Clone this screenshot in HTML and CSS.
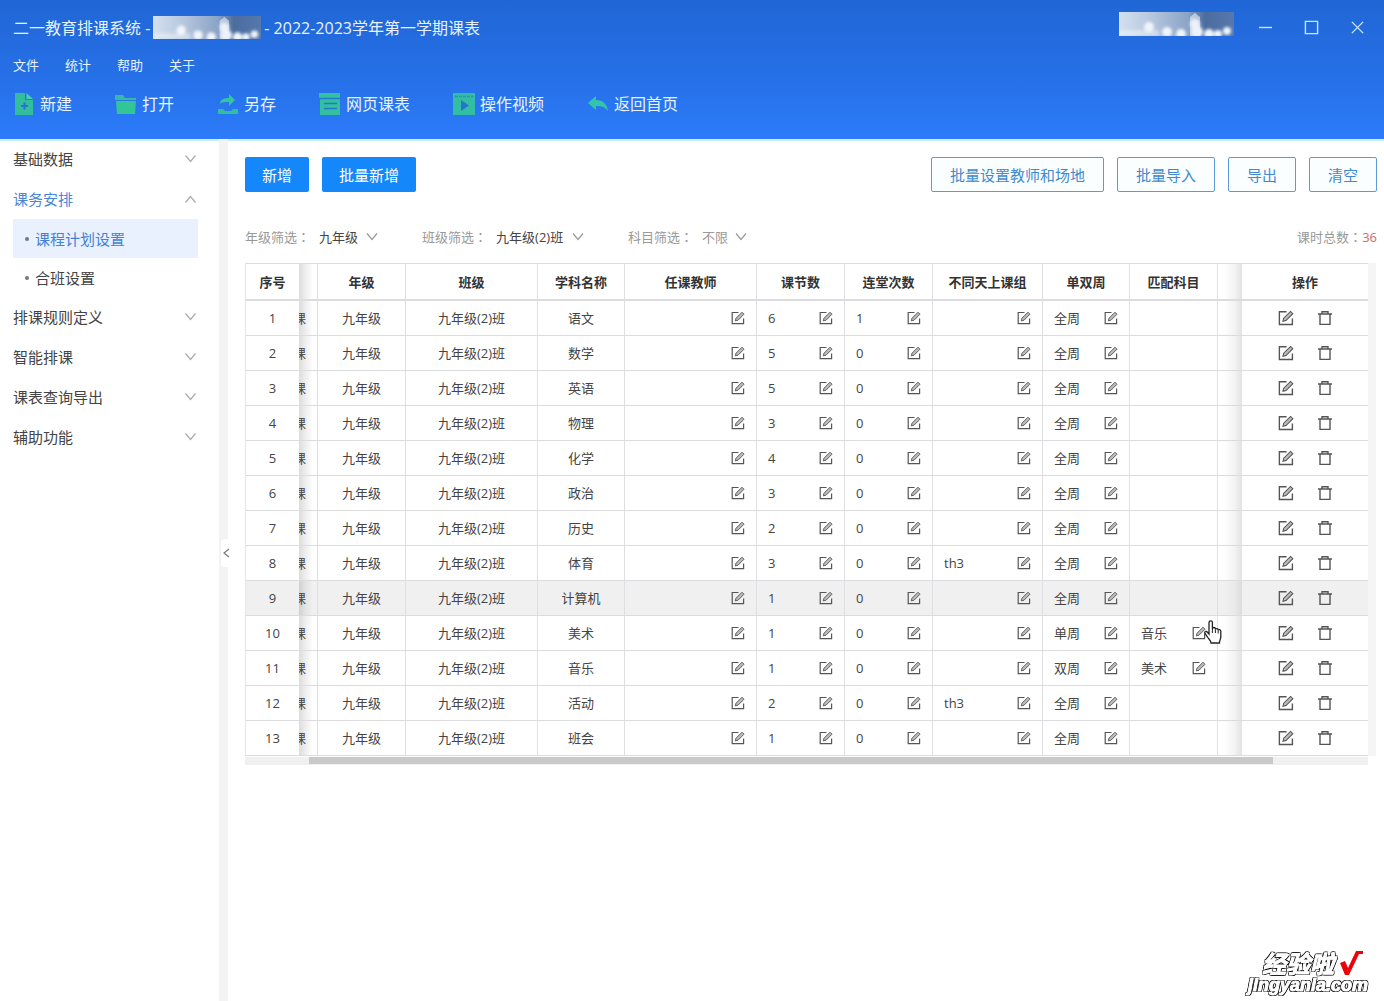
FILE: index.html
```html
<!DOCTYPE html>
<html lang="zh-CN">
<head>
<meta charset="utf-8">
<meta name="viewport" content="width=device-width, initial-scale=1">
<title>二一教育排课系统</title>
<link rel="stylesheet" href="styles.css">
</head>
<body>
<svg class="sprite" aria-hidden="true">
  <defs>
    <linearGradient id="sky" x1="0" x2="1" y1="0" y2="0">
      <stop offset="0" stop-color="#d3e0f0"/><stop offset=".3" stop-color="#b4c5dc"/>
      <stop offset=".6" stop-color="#8aa3c6"/><stop offset=".75" stop-color="#4b6c9f"/><stop offset="1" stop-color="#5778ac"/>
    </linearGradient>
    <filter id="soft" x="-20%" y="-20%" width="140%" height="140%"><feGaussianBlur stdDeviation="1.8"/></filter>
    <symbol id="i-cloud" viewBox="0 0 115 24" preserveAspectRatio="none">
      <rect width="115" height="24" fill="url(#sky)"/>
      <g fill="#f1f5fa" filter="url(#soft)">
        <circle cx="30" cy="15" r="5"/><circle cx="48" cy="20" r="5"/><circle cx="62" cy="22" r="5"/>
        <circle cx="76" cy="12" r="5"/><circle cx="78" cy="20" r="6"/><circle cx="90" cy="22" r="5"/>
        <circle cx="99" cy="22" r="4"/><circle cx="108" cy="19" r="4"/><rect x="0" y="18" width="40" height="6" opacity=".5"/>
      </g>
      <path d="M71 24V5L76 1l5 4v19z" fill="#eaf0f8" opacity=".6"/>
    </symbol>
    <symbol id="i-down" viewBox="0 0 12 12"><path d="M1 2.500l5 6 5-6" fill="none" stroke="currentColor" stroke-width="1.200"/></symbol>
    <symbol id="i-edit" viewBox="0 0 14 14">
      <path d="M7.500 1.500H1.200V12.700H12.600V7.500" fill="none" stroke="currentColor" stroke-width="1.200"/>
      <path d="M4.300 9.900l.7-2.700L11 1.200l2 2-6 6z" fill="#bbb" stroke="currentColor" stroke-width=".9"/>
    </symbol>
    <symbol id="i-trash" viewBox="0 0 16 16">
      <path d="M1 4h14M5 4V1.700h6V4M3 4v10.400h10V4" fill="none" stroke="currentColor" stroke-width="1.400"/>
    </symbol>
  </defs>
</svg>

<header class="top">
  <div class="titlebar">
    <h1 class="title"><span>二一教育排课系统 -</span><svg class="mask mask-title" aria-hidden="true"><use href="#i-cloud"/></svg><span>- 2022-2023学年第一学期课表</span></h1>
    <div class="window">
      <svg class="mask mask-user" aria-hidden="true"><use href="#i-cloud"/></svg>
      <button class="win" aria-label="最小化"><svg viewBox="0 0 16 16"><path d="M1 8h14"/></svg></button>
      <button class="win" aria-label="最大化"><svg viewBox="0 0 16 16"><path d="M1.500 1.500h13v13h-13z"/></svg></button>
      <button class="win" aria-label="关闭"><svg viewBox="0 0 16 16"><path d="M2 2l12 12M14 2L2 14"/></svg></button>
    </div>
  </div>
  <nav class="menu"><a href="#">文件</a><a href="#">统计</a><a href="#">帮助</a><a href="#">关于</a></nav>
  <div class="tools">
    <button class="tool"><svg viewBox="0 0 22 22"><path d="M2 0h10v7h8v15H2z" fill="#32bd9c"/><path d="M13.500 0L20 6h-6.500z" fill="#46d3ab"/><path d="M8 13h7M11.500 9.500v7" stroke="#2672d8" stroke-width="2"/></svg>新建</button>
    <button class="tool"><svg viewBox="0 0 22 22"><path d="M0 2h8l2 3h11v2H0z" fill="#35b9a8"/><path d="M1 8h20l-1 13H2z" fill="#32c596"/></svg>打开</button>
    <button class="tool"><svg viewBox="0 0 22 22"><path d="M3 11c0-4 3-6 9-6V1l6 6-6 6V9C8 9 5 9 3 11z" fill="#32c5a0"/><path d="M1 16h5l2 2h6l2-2h5v5H1z" fill="#32bd9c"/></svg>另存</button>
    <button class="tool"><svg viewBox="0 0 22 22"><path d="M0 0h21v5H0zM1 6h20v16H1z" fill="#32c0a0"/><path d="M0 5.500h21M5 10.500h13M5 15.500h13" stroke="#2378c8" stroke-width="1.500"/></svg>网页课表</button>
    <button class="tool"><svg viewBox="0 0 22 22"><path d="M0 0h22v22H0z" fill="#32bda4"/><path d="M2 3.500h18" stroke="#249ba4" stroke-width="1.500" stroke-dasharray="3 1"/><path d="M8 7l8 5.500L8 18z" fill="#2276cc"/></svg>操作视频</button>
    <button class="tool"><svg viewBox="0 0 22 22"><path d="M1 10l8-7v4c7 0 11 4 12 11-3-4-6-5-12-5v4z" fill="#32c5ac"/></svg>返回首页</button>
  </div>
</header>

<div class="body">
  <nav class="side">
    <a class="item" href="#">基础数据<svg><use href="#i-down"/></svg></a>
    <a class="item open" href="#">课务安排<svg><use href="#i-down"/></svg></a>
    <ul class="sub">
      <li class="current"><a href="#">课程计划设置</a></li>
      <li><a href="#">合班设置</a></li>
    </ul>
    <a class="item" href="#">排课规则定义<svg><use href="#i-down"/></svg></a>
    <a class="item" href="#">智能排课<svg><use href="#i-down"/></svg></a>
    <a class="item" href="#">课表查询导出<svg><use href="#i-down"/></svg></a>
    <a class="item" href="#">辅助功能<svg><use href="#i-down"/></svg></a>
  </nav>
  <div class="divider"><button class="collapse" aria-label="收起侧栏"><svg viewBox="0 0 8 10"><path d="M7 1L2 5l5 4"/></svg></button></div>

  <main class="main">
    <div class="actions">
      <button class="btn solid">新增</button>
      <button class="btn solid">批量新增</button>
      <span class="space"></span>
      <button class="btn line">批量设置教师和场地</button>
      <button class="btn line">批量导入</button>
      <button class="btn line">导出</button>
      <button class="btn line">清空</button>
    </div>
    <div class="filters">
      <div class="filter"><label for="grade">年级筛选<span class="colon" lang="zh-TW">：</span></label><span class="pick pick-m"><select id="grade"><option>九年级</option></select><svg><use href="#i-down"/></svg></span></div>
      <div class="filter"><label for="class">班级筛选<span class="colon" lang="zh-TW">：</span></label><span class="pick pick-l"><select id="class"><option>九年级(2)班</option></select><svg><use href="#i-down"/></svg></span></div>
      <div class="filter muted"><label for="subject">科目筛选<span class="colon" lang="zh-TW">：</span></label><span class="pick pick-s"><select id="subject"><option>不限</option></select><svg><use href="#i-down"/></svg></span></div>
      <p class="total">课时总数<span class="colon" lang="zh-TW">：</span><b>36</b></p>
    </div>
    <div class="grid">
      <table>
        <colgroup>
          <col class="w-no"><col class="w-cut"><col class="w-s"><col class="w-l"><col class="w-xs"><col class="w-l"><col class="w-s"><col class="w-s"><col class="w-m"><col class="w-xs"><col class="w-s"><col class="w-gap"><col class="w-op">
        </colgroup>
        <thead>
          <tr><th>序号</th><th class="cut"></th><th>年级</th><th>班级</th><th>学科名称</th><th>任课教师</th><th>课节数</th><th>连堂次数</th><th>不同天上课组</th><th>单双周</th><th>匹配科目</th><th class="gap"></th><th>操作</th></tr>
        </thead>
        <tbody id="rows"></tbody>
      </table>
      <div class="scroll"><div class="thumb"></div></div>
    </div>
  </main>
</div>

<div class="brand">
  <div class="brand-name">经验啦<svg viewBox="0 0 24 26"><path d="M1 13l5-2 3 7L17 1h7v3h-4L10 25H6z" fill="#f00008"/></svg></div>
  <div class="brand-site">jingyanla.com</div>
</div>
<script src="rows.js"></script>
</body>
</html>
```
FILE: styles.css
```css
* { box-sizing: border-box; }
body {
  margin: 0;
  min-height: 100vh;
  display: flex;
  flex-direction: column;
  background: #fff;
  color: #444;
  font: 13px/20px "Open Sans", "Noto Sans CJK SC", sans-serif;
}
button { font: inherit; color: inherit; background: none; border: 0; padding: 0; cursor: pointer; }
a { color: inherit; text-decoration: none; }
svg { display: block; flex: none; }
.sprite { position: absolute; width: 0; height: 0; }

/* header */
.top {
  position: relative;
  padding-bottom: 7px;
  color: #e6f3ff;
  background: linear-gradient(#2066d5, #2670e7 55%, #2c7bf9);
  box-shadow: 0 2px #cdeeff;
}
.titlebar { display: flex; justify-content: space-between; height: 55px; padding: 0 12px 0 13px; }
.title { display: flex; align-items: center; gap: 3px; margin: 0; font-size: 16px; font-weight: 400; white-space: nowrap; }
.mask-title { width: 108px; height: 23px; }
.window { display: flex; align-items: center; }
.mask-user { width: 115px; height: 24px; margin: 0 8px 8px 0; }
.win { display: grid; place-items: center; width: 46px; height: 32px; }
.win:last-child { width: 30px; margin-left: 8px; }
.win svg { width: 15px; height: 15px; fill: none; stroke: #c8e6ff; stroke-width: 1.5; }
.menu { display: flex; gap: 26px; padding-left: 13px; }
.tools { display: flex; gap: 43px; height: 57px; padding-left: 13px; }
.tool { display: flex; align-items: center; gap: 5px; font-size: 16px; white-space: nowrap; }
.tool svg { width: 22px; height: 22px; }

/* sidebar */
.body { flex: 1; display: flex; }
.side { flex: none; width: 219px; font-size: 15px; }
.item { display: flex; align-items: center; justify-content: space-between; height: 40px; padding: 0 22px 0 13px; }
.item svg { width: 13px; height: 12px; color: #aaa; }
.item.open { color: #4a86d8; }
.item.open svg { transform: rotate(180deg); }
.sub { list-style: none; margin: 0; padding: 0 21px 0 13px; }
.sub a { display: flex; align-items: center; gap: 6px; height: 39px; padding-left: 12px; }
.sub a::before { content: ""; width: 4px; height: 4px; border-radius: 2px; background: #777; }
.sub .current { color: #3f82d8; background: #eaf1fe; }
.divider { position: relative; flex: none; width: 9px; background: #f3f3f3; }
.collapse {
  position: absolute;
  top: 400px;
  left: 2px;
  display: grid;
  place-items: center;
  width: 10px;
  height: 28px;
  background: #fff;
  border-radius: 4px;
}
.collapse svg { width: 8px; height: 10px; fill: none; stroke: #777; stroke-width: 1.2; }

/* content */
.main { flex: 1; min-width: 0; padding: 18px 7px 0 17px; }
.actions { display: flex; gap: 13px; }
.space { flex: 1; }
.btn { height: 35px; border-radius: 2px; font-size: 15px; white-space: nowrap; }
.solid { padding: 0 17px; background: #1488fb; color: #fff; }
.line { padding: 0 18px; border: 1px solid #5c9bd8; color: #4189ce; background: #fbfeff; }
.filters { display: flex; gap: 44px; padding-top: 35px; }
.filter { display: flex; gap: 9px; color: #999; white-space: nowrap; }
.colon { font-family: "Noto Sans CJK TC", sans-serif; line-height: 1; }
.pick { display: grid; align-items: center; color: #444; }
.pick > * { grid-area: 1 / 1; }
.pick svg { justify-self: end; width: 12px; height: 12px; color: #999; pointer-events: none; }
.pick select { width: 100%; height: 20px; padding: 0; border: 0; background: none; font: inherit; color: inherit; appearance: none; }
.pick-s { width: 45px; }
.pick-m { width: 59px; }
.pick-l { width: 88px; }
.muted .pick { color: #999; }
.total { margin: 0 0 0 auto; color: #999; }
.total b { font-weight: 400; color: #d9666b; }

/* timetable grid */
.grid { margin: 16px 9px 0 0; }
table { width: 100%; table-layout: fixed; border-collapse: separate; border-spacing: 0; box-shadow: 8px 0 #f5f5f5; background: #fff; }
.w-no { width: 54px; }
.w-cut { width: 19px; }
.w-gap { width: 24px; }
.w-xs { width: 87px; }
.w-s { width: 88px; }
.w-m { width: 110px; }
.w-l { width: 132px; }
.w-op { width: 126px; }
th, td { padding: 0; border-right: 1px solid #dfdfe3; border-bottom: 1px solid #dcdcdf; text-align: center; white-space: nowrap; }
th:first-child, td:first-child { border-left: 1px solid #e6e6e6; border-right: 0; }
th:last-child, td:last-child, .gap { border-right: 0; }
th { height: 38px; border-top: 1px solid #dcdcdf; border-bottom: 2px solid #dcdcdf; color: #333; font-weight: 700; }
td { height: 35px; }
.cut { background: linear-gradient(90deg, #dcdcdc, #ededed 6px, #fff 14px); }
.gap { background: linear-gradient(270deg, #e2e2e2, #f4f4f4 8px, #fff 18px); }
.cut span { display: flex; justify-content: flex-end; width: 7px; overflow: hidden; }
.hover td { background-color: #f0f0f1; }
.hover .cut { background: linear-gradient(90deg, #d0d0d0, #e2e2e2 6px, #f0f0f1 14px); }
.hover .gap { background: linear-gradient(270deg, #dcdcdc, #eaeaea 8px, #f0f0f1 18px); }
.edit { display: flex; align-items: center; justify-content: space-between; padding: 0 11px; }
.edit svg { width: 14px; height: 14px; }
.ops { display: flex; align-items: center; justify-content: center; gap: 23px; color: #333; }
.ops svg { width: 16px; height: 16px; }
td button { color: #555; }
.pointed { position: relative; }
.hand { position: absolute; top: 3px; right: -6px; width: 20px; height: 26px; }
.scroll { height: 8px; margin-top: 1px; padding: 0 95px 0 64px; background: #f0f0f0; }
.thumb { height: 7px; background: #c9c9c9; }

/* corner mark */
.brand {
  position: fixed;
  right: 16px;
  bottom: 7px;
  color: #fff;
  text-align: right;
  -webkit-text-stroke: 1px #fff;
  text-shadow: 1px 0 #000, -1px 0 #000, 0 1px #000, 0 -1px #000, 1px 1px #000, -1px -1px #000, 1px -1px #000, -1px 1px #000;
}
.brand-name { display: flex; align-items: center; justify-content: flex-end; gap: 5px; padding-right: 5px; font: italic 700 24px/26px "Noto Sans CJK SC", sans-serif; }
.brand-name svg { width: 24px; height: 26px; }
.brand-site { font: italic 700 18px/18px "Liberation Sans", sans-serif; }
```
FILE: rows.js
```js
// subject, lessons, double lessons, group, week, paired subject
const plan = [
  ["语文", 6, 1, "", "全周", ""],
  ["数学", 5, 0, "", "全周", ""],
  ["英语", 5, 0, "", "全周", ""],
  ["物理", 3, 0, "", "全周", ""],
  ["化学", 4, 0, "", "全周", ""],
  ["政治", 3, 0, "", "全周", ""],
  ["历史", 2, 0, "", "全周", ""],
  ["体育", 3, 0, "th3", "全周", ""],
  ["计算机", 1, 0, "", "全周", ""],
  ["美术", 1, 0, "", "单周", "音乐"],
  ["音乐", 1, 0, "", "双周", "美术"],
  ["活动", 2, 0, "th3", "全周", ""],
  ["班会", 1, 0, "", "全周", ""]
];
const hovered = 9;
const pointed = 10;

const icon = (name, label) => `<button aria-label="${label}"><svg><use href="#i-${name}"/></svg></button>`;
const edit = value => `<div class="edit"><span>${value}</span>${icon("edit", "编辑")}</div>`;
const hand = `<svg class="hand" viewBox="0 0 20 26" aria-hidden="true"><path d="M6 15V3.500a1.700 1.700 0 0 1 3.400 0V10c0-2 3-2 3 0v.8c0-1.800 2.800-1.600 2.800.2v.8c0-1.600 2.600-1.400 2.600.4V18c0 2-1.300 3-1.300 6H8c0-2.500-2-3.500-3.500-6L2 14.500c-1-1.700 1-2.700 2.200-1.500z" fill="#fff" stroke="#222" stroke-width="1.300"/><path d="M9.400 10v4M12.400 11v3M15.200 12v2.500" stroke="#222"/></svg>`;

document.getElementById("rows").innerHTML = plan.map(([subject, lessons, doubles, group, week, pair], i) => {
  const no = i + 1;
  return `<tr class="${no === hovered ? "hover" : ""}">
    <td>${no}</td><td class="cut"><span>课</span></td><td>九年级</td><td>九年级(2)班</td><td>${subject}</td>
    <td>${edit("")}</td><td>${edit(lessons)}</td><td>${edit(doubles)}</td><td>${edit(group)}</td><td>${edit(week)}</td>
    <td class="${no === pointed ? "pointed" : ""}">${pair ? edit(pair) : ""}${no === pointed ? hand : ""}</td>
    <td class="gap"></td><td><div class="ops">${icon("edit", "编辑")}${icon("trash", "删除")}</div></td>
  </tr>`;
}).join("");
```
